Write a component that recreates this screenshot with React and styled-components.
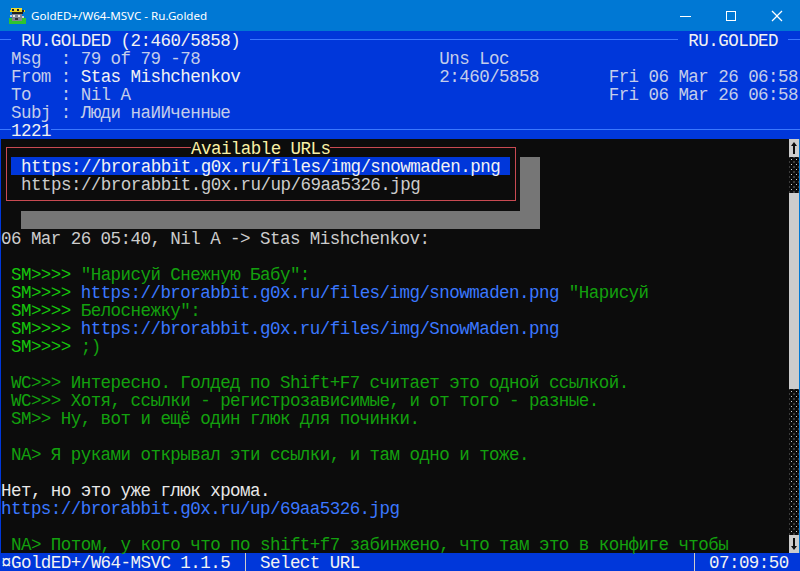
import React from 'react';
import styled, { createGlobalStyle } from 'styled-components';
import { VscChromeMinimize, VscChromeMaximize, VscChromeClose } from 'react-icons/vsc';

const GlobalStyle = createGlobalStyle`
  html, body {
    margin: 0;
    padding: 0;
    background: #0c0c0c;
  }
`;

const Window = styled.div`
  width: 800px;
  height: 571px;
  overflow: hidden;
  background: #0c0c0c;
`;

const TitleBar = styled.div`
  height: 31px;
  display: flex;
  align-items: center;
  background: #0078d4;
  color: #fff;
  font-family: 'Noto Sans', sans-serif;
  font-size: 11.6px;
`;

const AppIcon = styled.svg`
  width: 17px;
  height: 16px;
  margin: 0 5px 0 9px;
`;

const WindowTitle = styled.div`
  flex: 1;
`;

const WinButton = styled.div`
  width: 46px;
  height: 31px;
  display: flex;
  align-items: center;
  justify-content: center;
  font-size: 16px;
`;

const Console = styled.div`
  font-family: 'Liberation Mono', monospace;
  font-size: 17.5px;
  letter-spacing: -0.54px;
  line-height: 20px;
  white-space: pre;
`;

const Header = styled.div`
  background: #0037da;
  color: #c4cdea;
`;

const Row = styled.div`
  height: 18px;
  padding-left: 1px;
`;

const RuleRow = styled.div`
  height: 18px;
  display: flex;
  align-items: flex-start;
  color: #f2f2f2;
`;

const Rule = styled.div`
  flex: ${(p) => (p.$width ? `0 0 ${p.$width}px` : 1)};
  height: 1px;
  margin-top: 8px;
  background: #3b78ff;
`;

const Bright = styled.span`
  color: #f2f2f2;
`;

const Body = styled.div`
  position: relative;
  height: 414px;
  color: #cccccc;
  display: flex;
`;

const Edge = styled.div`
  position: absolute;
  left: ${(p) => (p.$right ? 'auto' : '0')};
  right: ${(p) => (p.$right ? '0' : 'auto')};
  top: 0;
  bottom: 0;
  width: 1px;
  background: ${(p) => (p.$right ? '#0078d4' : '#0037da')};
`;

const Text = styled.div`
  flex: 1;
  min-width: 0;
`;

const Part = styled.span`
  color: ${(p) => p.$color};
`;

const Scrollbar = styled.div`
  width: 10px;
  margin-right: 1px;
  display: flex;
  flex-direction: column;
`;

const ScrollArrow = styled.div`
  height: 18px;
  background: #cccccc;
  display: flex;
  align-items: center;
  justify-content: center;
`;

const ScrollDots = styled.div`
  height: ${(p) => p.$height}px;
  background-color: #0c0c0c;
  background-image:
    radial-gradient(#cccccc 0.7px, transparent 0.9px),
    radial-gradient(#cccccc 0.7px, transparent 0.9px);
  background-size: 5px 5px;
  background-position: 0 0, 2.5px 2.5px;
`;

const ScrollThumb = styled.div`
  height: ${(p) => p.$height}px;
  background: #cccccc;
`;

const Popup = styled.div`
  position: absolute;
  left: 1px;
  top: 0;
  width: 519px;
  height: 72px;
  background: #0c0c0c;
  box-shadow: 20px 18px 0 #767676;
`;

const PopupFrame = styled.div`
  position: absolute;
  left: 5px;
  right: 4px;
  top: 8px;
  bottom: 10px;
  border: 1px solid #c94a52;
`;

const PopupTitle = styled.div`
  position: absolute;
  left: 190px;
  top: 0;
  height: 18px;
  background: #0c0c0c;
  color: #f9f1a5;
`;

const PopupList = styled.div`
  position: absolute;
  left: 10px;
  right: 10px;
  top: 18px;
  letter-spacing: -0.52px;
`;

const UrlItem = styled.div`
  height: 18px;
  padding-left: 10px;
  background: ${(p) => (p.$selected ? '#0037da' : 'transparent')};
  color: ${(p) => (p.$selected ? '#f2f2f2' : '#cccccc')};
`;

const StatusBar = styled.div`
  height: 18px;
  display: flex;
  background: #0037da;
  color: #f2f2f2;
`;

const StatusCell = styled.div`
  flex: ${(p) => (p.$width ? `0 0 ${p.$width}px` : 1)};
  padding-left: ${(p) => p.$indent || 0}px;
  box-sizing: border-box;
`;

const StatusDivider = styled.div`
  width: 1px;
  background: #cccccc;
`;

const GREEN = '#13a10e';
const LIME = '#16c60c';
const LINK = '#3b78ff';
const WHITE = '#e8e8e8';

const lines = [
  [],
  [],
  [],
  [],
  [],
  [['#cccccc', '06 Mar 26 05:40, Nil A -> Stas Mishchenkov:']],
  [],
  [[LIME, ' SM>>>> '], [GREEN, '"Нарисуй Снежную Бабу":']],
  [[LIME, ' SM>>>> '], [LINK, 'https://brorabbit.g0x.ru/files/img/snowmaden.png'], [GREEN, ' "Нарисуй']],
  [[LIME, ' SM>>>> '], [GREEN, 'Белоснежку":']],
  [[LIME, ' SM>>>> '], [LINK, 'https://brorabbit.g0x.ru/files/img/SnowMaden.png']],
  [[LIME, ' SM>>>> '], [GREEN, ';)']],
  [],
  [[GREEN, ' WC>>> Интересно. Голдед по Shift+F7 считает это одной ссылкой.']],
  [[GREEN, ' WC>>> Хотя, ссылки - регистрозависимые, и от того - разные.']],
  [[GREEN, ' SM>> Ну, вот и ещё один глюк для починки.']],
  [],
  [[GREEN, ' NA> Я руками открывал эти ссылки, и там одно и тоже.']],
  [],
  [[WHITE, 'Нет, но это уже глюк хрома.']],
  [[LINK, 'https://brorabbit.g0x.ru/up/69aa5326.jpg']],
  [],
  [[GREEN, ' NA> Потом, у кого что по shift+f7 забинжено, что там это в конфиге чтобы']],
];

// pixel-art program icon: hat, gray blob, green ground
const AppLogo = () => (
  <AppIcon viewBox="0 0 17 16">
    <rect x="0" y="10" width="17" height="6" fill="#2fc42f" />
    <rect x="2" y="0" width="11" height="2" fill="#f0dc30" />
    <rect x="1" y="2" width="15" height="2" fill="#e8d020" />
    <rect x="3" y="1" width="2" height="2" fill="#222" />
    <rect x="8" y="1" width="2" height="2" fill="#222" />
    <rect x="13" y="2" width="2" height="2" fill="#222" />
    <rect x="3" y="4" width="11" height="2" fill="#222" />
    <rect x="3" y="6" width="10" height="7" fill="#7d8594" />
    <rect x="4" y="7" width="2" height="2" fill="#e8e8e8" />
    <rect x="9" y="7" width="2" height="2" fill="#e8e8e8" />
    <rect x="6" y="10" width="3" height="2" fill="#333" />
    <rect x="1" y="7" width="2" height="2" fill="#c8ccd4" />
    <rect x="13" y="8" width="2" height="2" fill="#c8ccd4" />
  </AppIcon>
);

const App = () => {
  return (
    <Window>
      <GlobalStyle />
      <TitleBar>
        <AppLogo />
        <WindowTitle>GoldED+/W64-MSVC - Ru.Golded</WindowTitle>
        <WinButton><VscChromeMinimize /></WinButton>
        <WinButton><VscChromeMaximize /></WinButton>
        <WinButton><VscChromeClose /></WinButton>
      </TitleBar>
      <Console>
        <Header>
          <RuleRow>
            <Rule $width={11} />
            <span> RU.GOLDED (2:460/5858) </span>
            <Rule />
            <span> RU.GOLDED </span>
            <Rule $width={12} />
          </RuleRow>
          <Row>{' Msg  : 79 of 79 -78                        Uns Loc'}</Row>
          <Row>{' From : '}<Bright>Stas Mishchenkov</Bright>{'                    2:460/5858       Fri 06 Mar 26 06:58'}</Row>
          <Row>{' To   : Nil A                                                Fri 06 Mar 26 06:58'}</Row>
          <Row>{' Subj : Люди наИИченные'}</Row>
          <RuleRow>
            <Rule $width={11} />
            <span>1221</span>
            <Rule />
          </RuleRow>
        </Header>
        <Body>
          <Edge />
          <Edge $right />
          <Text>
            {lines.map((line, i) => (
              <Row key={i}>
                {line.map(([color, text], j) => (
                  <Part key={j} $color={color}>{text}</Part>
                ))}
              </Row>
            ))}
          </Text>
          <Scrollbar>
            <ScrollArrow>
              <svg width="8" height="14" viewBox="0 0 8 14"><path d="M4 1 7 5H5v8H3V5H1z" fill="#0c0c0c" /></svg>
            </ScrollArrow>
            <ScrollDots $height={36} />
            <ScrollThumb $height={196} />
            <ScrollDots $height={146} />
            <ScrollArrow>
              <svg width="8" height="14" viewBox="0 0 8 14"><path d="M4 13 7 9H5V1H3v8H1z" fill="#0c0c0c" /></svg>
            </ScrollArrow>
          </Scrollbar>
          <Popup>
            <PopupFrame />
            <PopupTitle>Available URLs</PopupTitle>
            <PopupList>
              <UrlItem $selected>https://brorabbit.g0x.ru/files/img/snowmaden.png</UrlItem>
              <UrlItem>https://brorabbit.g0x.ru/up/69aa5326.jpg</UrlItem>
            </PopupList>
          </Popup>
        </Body>
        <StatusBar>
          <StatusCell $width={245} $indent={1}>{'¤GoldED+/W64-MSVC 1.1.5'}</StatusCell>
          <StatusDivider />
          <StatusCell $width={448} $indent={14}>Select URL</StatusCell>
          <StatusDivider />
          <StatusCell $indent={14}>07:09:50</StatusCell>
        </StatusBar>
      </Console>
    </Window>
  );
};

export default App;
